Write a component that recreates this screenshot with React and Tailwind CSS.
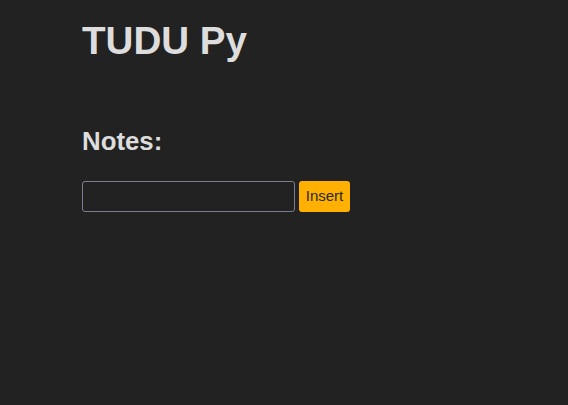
export default function App() {
  return (
    <div className="min-h-[405px] w-full bg-[#222222] text-[#dddddd] pl-[82px] pt-[19px]" style={{ fontFamily: '"Liberation Sans", Arial, sans-serif' }}>
      <h1 className="text-[38.6px] font-bold leading-[44px] m-0">TUDU Py</h1>
      <h2 className="text-[25.8px] font-bold leading-[30px] mt-[63px]">Notes:</h2>
      <div className="flex gap-[4px] mt-[25px]">
        <input className="w-[213px] h-[31px] border border-[#7d7d90] rounded-[3px] bg-transparent text-[#dddddd] px-1 outline-none" />
        <button className="w-[51px] h-[31px] bg-[#ffb000] rounded-[3px] text-[#2a2a2a] text-[15px]">Insert</button>
      </div>
    </div>
  );
}
